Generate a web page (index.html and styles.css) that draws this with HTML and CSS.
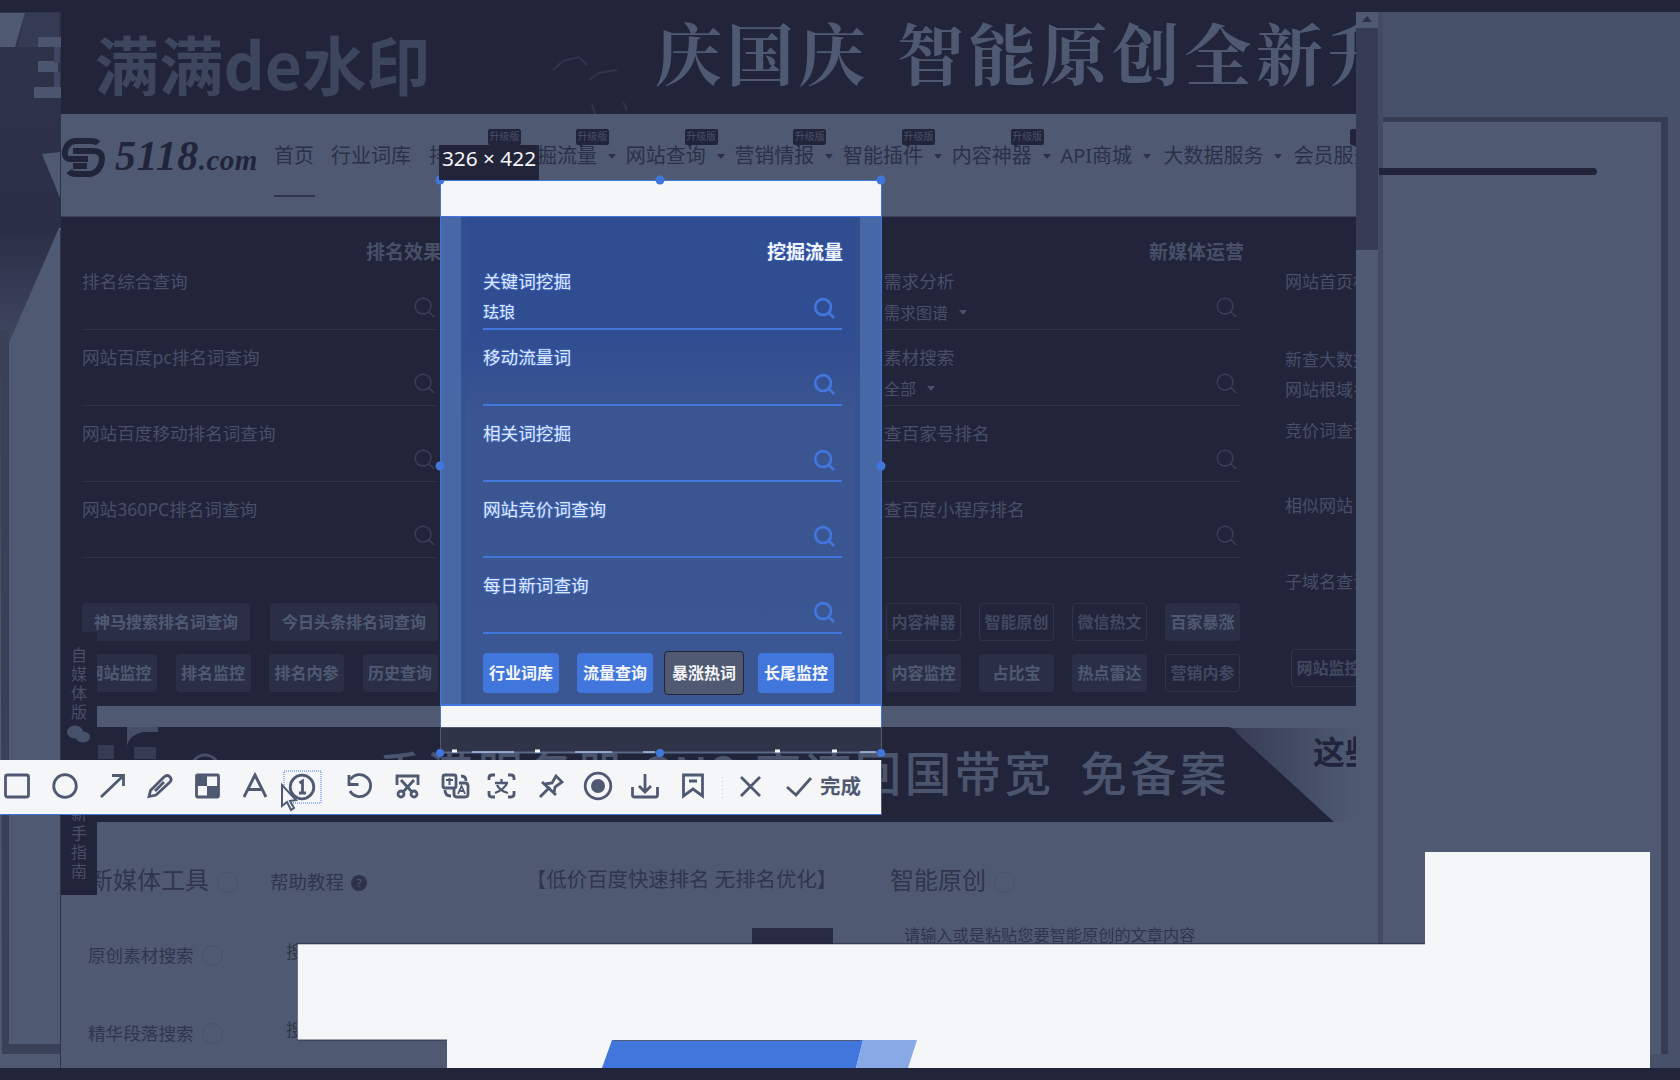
FILE: index.html
```html
<!DOCTYPE html>
<html lang="zh-CN">
<head>
<meta charset="utf-8">
<title>5118 截图</title>
<link rel="stylesheet" href="styles.css">
</head>
<body>
<svg class="defs" width="0" height="0">
  <symbol id="mag" viewBox="0 0 24 24"><circle cx="11" cy="11" r="8.6"/><path d="M17 17l6 6"/></symbol>
</svg>
<div class="screen">
  <div class="edge"></div>
  <div class="stage">
    <div class="gutter">
      <svg width="61" height="1056" viewBox="0 12 61 1056">
        <defs><linearGradient id="g" x1="0" y1="0" x2="0" y2="1"><stop offset="0" stop-color="#303449"/><stop offset=".6" stop-color="#2b2f46"/><stop offset="1" stop-color="#434c64"/></linearGradient></defs>
        <rect y="12" width="61" height="360" fill="url(#g)"/>
        <path d="M0 13h59v26H39v8H18l7-34z" fill="#353b52"/>
        <path d="M0 13h25L15 47H0z" fill="#4f5a72"/>
        <path d="M38 37h23v10H38zM38 61h20v11H38zM34 87h27v11H34z" fill="#4b556d"/>
        <path d="M54 47h6v16h-6zM54 72h6v15h-6z" fill="#3f4860"/>
        <path d="M42 154l18-2v46z" fill="#4f5a72"/>
        <path d="M59 228L8 345v723h53V228z" fill="#4f5a72"/>
        <path d="M0 330h9v714h52v10H2z" fill="#3a4157"/>
        <path d="M60.500 230v838" stroke="#30354b"/>
      </svg>
    </div>
    <main class="page">
      <header class="hero">
        <span class="mark">满满de水印</span>
        <svg class="bird" width="80" height="102" viewBox="0 0 80 102"><path d="M6 58l10-9 16-4 8 8M42 68l10-7 18-3M45 92l3 10M76 90l6 12" fill="none" stroke="#30354b" stroke-width="2"/></svg>
        <span class="slogan">庆国庆 智能原创全新升</span>
      </header>
      <nav class="nav">
        <svg class="logo" width="45" height="42" viewBox="0 0 45 42"><g fill="none" stroke="#22243a" stroke-width="6" stroke-linejoin="round"><path d="M37 6.500Q35 4 30 4H14Q6 5 4 14q-1 8 5 8h18"/><path d="M12 14h20q9 0 9 8-1 12-11 15H15q-5 0-7-3"/><path d="M12 29h14"/></g></svg>
        <span class="brand">5118<small>.com</small></span>
        <div class="menu">
          <a class="home">首页</a><a class="lib">行业词库</a>
          <a class="item w">排名监控<b>升级版</b></a>
          <a class="item">挖掘流量<i></i><b>升级版</b></a>
          <a class="item">网站查询<i></i><b>升级版</b></a>
          <a class="item">营销情报<i></i><b>升级版</b></a>
          <a class="item">智能插件<i></i><b>升级版</b></a>
          <a class="item">内容神器<i></i><b>升级版</b></a>
          <a class="item api">API商城<i></i></a>
          <a class="item data">大数据服务<i></i></a>
          <a class="item">会员服务<b class="last"></b></a>
        </div>
      </nav>
      <section class="board">
        <div class="col c1">
          <h3>排名效果</h3>
          <div class="field"><label>排名综合查询</label><div class="in"><svg><use href="#mag"/></svg></div></div>
          <div class="field"><label>网站百度pc排名词查询</label><div class="in"><svg><use href="#mag"/></svg></div></div>
          <div class="field"><label>网站百度移动排名词查询</label><div class="in"><svg><use href="#mag"/></svg></div></div>
          <div class="field"><label>网站360PC排名词查询</label><div class="in"><svg><use href="#mag"/></svg></div></div>
          <div class="btns wide"><span>神马搜索排名词查询</span><span>今日头条排名词查询</span></div>
          <div class="btns"><span>网站监控</span><span>排名监控</span><span>排名内参</span><span>历史查询</span></div>
        </div>
        <div class="col c3">
          <h3>新媒体运营</h3>
          <div class="field"><label>需求分析</label><div class="in"><em>需求图谱<i></i></em><svg><use href="#mag"/></svg></div></div>
          <div class="field"><label>素材搜索</label><div class="in"><em>全部<i></i></em><svg><use href="#mag"/></svg></div></div>
          <div class="field"><label>查百家号排名</label><div class="in"><svg><use href="#mag"/></svg></div></div>
          <div class="field"><label>查百度小程序排名</label><div class="in"><svg><use href="#mag"/></svg></div></div>
          <div class="btns"><span class="off">内容神器</span><span class="off">智能原创</span><span class="off">微信热文</span><span>百家暴涨</span></div>
          <div class="btns"><span>内容监控</span><span>占比宝</span><span>热点雷达</span><span class="off">营销内参</span></div>
        </div>
        <div class="col c4">
          <p>网站首页权重</p><p class="p2">新查大数据</p><p class="p3">网站根域名</p><p class="p4">竞价词查询</p><p class="p5">相似网站</p><p class="p6">子域名查询</p>
          <div class="btns"><span class="off">网站监控</span></div>
        </div>
      </section>
      <section class="ad">
        <svg width="1295" height="95" viewBox="0 0 1295 95">
          <defs><linearGradient id="h"><stop offset="0" stop-color="#363c53"/><stop offset="1" stop-color="#4f5a72"/></linearGradient></defs>
          <path d="M1171 1h124v94h-22z" fill="url(#h)"/><path d="M0 0h1168q5 1 8 6l97 89H0z" fill="#22243a"/>
          <path d="M66 0h31v5H82Q68 8 66 19z" fill="#454e66"/><path d="M37 18h16v14H37zM73 20h22v12H73z" fill="#353b52"/><circle cx="144" cy="42" r="14" fill="none" stroke="#454e66" stroke-width="3"/>
        </svg>
        <span class="adtext">香港服务器 CN2 高速回国带宽 <s>免备案</s></span><span class="more">这些</span>
      </section>
      <section class="tools">
        <div class="left">
          <h4>新媒体工具<u></u></h4><p class="help">帮助教程<q>?</q></p>
          <p class="t1">原创素材搜索<u></u></p><p class="t2">搜</p>
          <p class="t1">精华段落搜索<u></u></p><p class="t2">搜</p>
        </div>
        <div class="mid"><p>【低价百度快速排名 无排名优化】</p><span></span></div>
        <div class="right"><h4>智能原创<u></u></h4><p>请输入或是粘贴您要智能原创的文章内容</p></div>
      </section>
      <aside class="side"><span>自</span><span>媒</span><span>体</span><span>版</span><svg width="24" height="18" viewBox="0 0 24 18"><ellipse cx="8" cy="7" rx="8" ry="6.500"/><ellipse cx="16" cy="12" rx="7" ry="5.500"/></svg><span class="gap">新</span><span>手</span><span>指</span><span>南</span></aside>
    </main>
    <div class="scroll"><svg width="22" height="16" viewBox="0 0 22 16"><path d="M6 10l5-6 5 6z" fill="#2c3047"/></svg><div class="thumb"></div></div>
    <aside class="desk"><div class="doc"><div class="bar"></div></div></aside>
  </div>
  <div class="edge"></div>

  <svg class="cover" width="1353" height="216" viewBox="297 852 1353 216">
    <path d="M297 944H1425V852H1650V1068H447V1040H297z" fill="#f5f6f8"/>
    <path d="M612 1040H863L856 1068H602z" fill="#4176dd"/><path d="M863 1040H917L908 1068H856z" fill="#88a9e6"/>
    <path d="M614 1040.500H860" stroke="#4f5a72"/><path d="M297 943.800H1425M297.300 944V1040H447" fill="none" stroke="#22243a" stroke-width=".8"/>
  </svg>

  <section class="pick">
    <div class="strip top"></div>
    <div class="col c2">
      <h3>挖掘流量</h3>
      <div class="field"><label>关键词挖掘</label><div class="in"><em>珐琅</em><svg><use href="#mag"/></svg></div></div>
      <div class="field"><label>移动流量词</label><div class="in"><svg><use href="#mag"/></svg></div></div>
      <div class="field"><label>相关词挖掘</label><div class="in"><svg><use href="#mag"/></svg></div></div>
      <div class="field"><label>网站竞价词查询</label><div class="in"><svg><use href="#mag"/></svg></div></div>
      <div class="field"><label>每日新词查询</label><div class="in"><svg><use href="#mag"/></svg></div></div>
      <div class="btns"><span>行业词库</span><span>流量查询</span><span class="hot">暴涨热词</span><span>长尾监控</span></div>
    </div>
    <div class="strip"></div>
    <div class="foot"></div>
    <svg class="grips" width="457" height="589" viewBox="-8 -8 457 589">
      <path d="M.500 546V.500H441.500V546" fill="none" stroke="#4176dd"/>
      <path d="M.500 546V573M441.500 546V573" stroke="#4f5a72"/><path d="M0 572.500H441" stroke="#596988" stroke-width="2"/>
      <path d="M32 572h42M135 572h37M203 572h12M420 572h16" stroke="#a9bde9" stroke-width="1.500"/>
      <path d="M12 571h5M95 571h5M335 571h5M392 571h5" stroke="#f5f6f8" stroke-width="3"/>
      <g fill="#4176dd"><circle cx="0" cy="0" r="4.500"/><circle cx="220" cy="0" r="4.500"/><circle cx="441" cy="0" r="4.500"/><circle cx="0" cy="286" r="4.500"/><circle cx="441" cy="286" r="4.500"/><circle cx="0" cy="573" r="4"/><circle cx="220" cy="573" r="4"/><circle cx="441" cy="573" r="4"/></g>
    </svg>
  </section>
  <div class="size">326 × 422</div>

  <div class="toolbar">
    <svg class="icons" width="881" height="54" viewBox="0 760 881 54">
      <g fill="none" stroke="#4f5a72" stroke-width="2.800">
        <rect x="5.500" y="775" width="23" height="22" rx="2"/>
        <circle cx="65" cy="786" r="11.300"/>
        <path d="M101 797L123 776M112 775.500h11.500V786"/>
        <path d="M149 796.500l1.500-6L164 777q3.500-3 6 0t-.500 5.500L156 795zM155 791l9-9"/>
        <rect x="196.500" y="775" width="22" height="22" rx="1"/>
        <path d="M244 797L255 775L266 797M248.500 789.500h13"/>
        <circle cx="302" cy="787" r="11.800"/><path d="M299.500 783l3-2v12M299 793h7"/>
        <path d="M350.500 779.500A11 11 0 1 1 350 791"/>
        <path d="M349 775v9.500h9.500"/>
        <path d="M397 785v-9h21v9M401 780l11 12M414 780l-11 12"/><circle cx="401" cy="794" r="3"/><circle cx="414" cy="794" r="3"/>
        <rect x="443" y="775" width="13" height="13" rx="2"/><path d="M459 783h6q3 0 3 3v8q0 3-3 3h-8q-3 0-3-3v-5M461 776q5 0 5 5M445 790q0 6 6 6"/><path d="M446 780h7M449.500 778v7" stroke-width="2"/><path d="M458 794l3.500-8 3.500 8M459 791h5" stroke-width="1.800"/>
        <path d="M489 780v-2q0-3 3-3h3M508 775h3q3 0 3 3v2M514 791v3q0 3-3 3h-3M495 797h-3q-3 0-3-3v-3"/><path d="M495 783h13M501.500 779v4M507 783q-2 6-12 10M497 785q3 6 11 8" stroke-width="2.300"/>
        <path d="M540 797l10-10M542 782l14 13M545 784l7-1 4-7 6 6-7 5-1 6"/>
        <circle cx="598" cy="786" r="12.800"/>
        <path d="M645 774v18M639 786l6 6 6-6M632.500 787v8q0 2 2 2h21q2 0 2-2v-8"/>
        <path d="M683.500 775h19v21l-9.500-7-9.500 7zM689 781h8"/>
        <path d="M741 777l19 19M760 777l-19 19M787 787l9 8 15-17"/>
      </g>
      <circle cx="598" cy="786" r="7" fill="#4f5a72"/>
      <path d="M196 775h11v11h-11zM207 786h12v12h-12z" fill="#4f5a72"/>
      <path d="M722.500 777v22" stroke="#b8c6e4" stroke-dasharray="1 3"/>
      <rect x="284" y="771" width="37" height="32" fill="none" stroke="#4176dd" stroke-dasharray="1 1"/>
      <path d="M282 785v21l5-4 4 8 3-2-4-7 6-1z" fill="#f5f6f8" stroke="#4f5a72" stroke-width="2"/>
    </svg>
    <span class="done">完成</span>
  </div>
</div>
</body>
</html>
```
FILE: styles.css
```css
:root{--ink:#22243a;--slate:#4f5a72;--blue:#4176dd;--paper:#f5f6f8}
*{box-sizing:border-box}
body,h3,h4,p{margin:0}
body{background:var(--ink);font-family:"Noto Sans","Noto Sans CJK SC",sans-serif;color:var(--slate);overflow:hidden;white-space:nowrap}
.defs{position:absolute}
i,em{font-style:normal}
s,q{text-decoration:none;quotes:none}
q::before,q::after{content:none}
.screen{position:relative;width:1680px;height:1080px;display:flex;flex-direction:column;overflow:hidden}
.edge{height:12px;background:var(--ink);flex:none}
.stage{height:1056px;display:flex;background:var(--slate)}
.gutter{width:61px;flex:none}
.gutter svg{display:block}
.page{position:relative;width:1295px;flex:none;overflow:hidden;background:var(--slate)}

.hero{height:102px;background:var(--ink);display:flex;overflow:hidden}
.mark{width:456px;flex:none;padding-left:34px;font:700 64px/100px "Noto Sans CJK SC",sans-serif;letter-spacing:.2px;color:#3e465d}
.bird{width:80px;margin-left:30px;flex:none}
.slogan{margin-left:28px;flex:none;font:700 67px/78px "Noto Serif CJK SC","Noto Sans CJK SC",serif;letter-spacing:4.800px;word-spacing:5px;color:var(--slate)}

.nav{height:103px;display:flex;border-bottom:1px solid #394057;color:#2b3047}
.logo{margin-top:23px;width:45px;flex:none}
.brand{width:168px;padding-left:9px;font:italic 700 42px/84px "Liberation Serif",serif;color:var(--ink);letter-spacing:.5px;flex:none}
.brand small{font-size:29px}
.menu{display:flex;font-size:20px;line-height:28px;padding-top:28px}
.menu a{height:60px;flex:none}
.menu .home{width:41px;border-bottom:2px solid #2f344a;margin-right:16px;height:55px}
.lib{width:98px}
.item{position:relative;width:108.700px}
.item.w{width:88px}
.item.api{width:103px}
.item.data{width:130px}
.menu i,.in i{display:inline-block;border:4px solid transparent;border-top:5px solid currentColor;border-bottom:0;margin-left:11px;vertical-align:4px}
.item b{position:absolute;left:59px;top:-13px;width:33px;height:16px;background:var(--ink);border-radius:2px;color:#475169;font-size:10px;line-height:15px;text-align:center;font-weight:400}
.item b::after{content:"";position:absolute;left:2px;top:15px;border:3px solid transparent;border-top-color:var(--ink)}
.item b.last{left:57px}

.board{height:489px;background:var(--ink);display:flex;color:#475068}
.col h3{height:51px;padding-top:23px;font-size:19px;line-height:24px;text-align:right}
.c1{width:375px;padding-left:21px;margin-right:448px;flex:none}
.c1 h3{padding-right:0;margin-right:-6px}
.c3{width:356px;flex:none}
.c3 h3{padding-right:0;margin-right:-4px}
.c4{padding:51px 0 0 45px}
.field{height:62px;margin-bottom:14px;border-bottom:1px solid #2d3247}
.field label{display:block;height:28px;font-size:17.600px;line-height:27px}
.in{height:33px;display:flex;align-items:center}
.in em{font-size:16px;line-height:28px}
.in svg{width:22px;height:22px;margin:-11px 3px 0 auto;fill:none;stroke:#3a4158;stroke-width:1.500}
.c1 .in svg{margin-right:1px}
.btns{display:flex;gap:18px;height:38px;margin-bottom:13px}
.btns span{width:75px;flex:none;border-radius:4px;background:#2b2f45;text-align:center;font-size:16px;font-weight:700;line-height:38px;color:#4f5a72}
.c1 .field:nth-last-child(3),.c3 .field:nth-last-child(3){margin-bottom:45px}
.wide span{width:168px}
.c1 .btns{gap:18.500px}
.c1 .btns.wide{gap:20px}
.c3 .btns{margin-left:2px}
.btns .off{background:var(--ink);border:1px solid #30354b;color:#414960;line-height:36px}
.c4 p{font-size:17px;line-height:28px;height:78px}
.c4 .p2{height:30px}.c4 .p3{height:41px}.c4 .p4{height:75px}.c4 .p5{height:76px}.c4 .p6{height:81px}
.c4 .btns{margin-left:6px}

.ad{position:relative;margin-top:21px;height:95px;display:flex;color:#4b556d}
.ad svg{position:absolute;left:0;top:0}
.adtext{position:relative;width:1169px;flex:none;text-align:right;font:500 46.500px/88px "Noto Sans CJK SC",sans-serif;letter-spacing:3.400px}
.adtext s{margin-left:12px}
.more{position:relative;margin-left:83px;flex:none;font-size:32px;line-height:50px;font-weight:700;color:var(--ink)}

.tools{display:flex;height:246px;color:#30354c}
.left{width:470px;padding:43px 0 0 27px;display:grid;grid-template-columns:182px 1fr;grid-template-rows:75px 78px 60px;align-content:start;flex:none}
.tools h4{font-size:24px;line-height:30px;font-weight:400;padding-left:1px}
.left p{font-size:17.600px;line-height:30px}
.left .help{font-size:18.500px;line-height:34px}
.left .t2{padding-left:16px;margin-top:-4px}
.tools u{display:inline-block;width:21px;height:21px;border:1px solid #475169;border-radius:50%;margin-left:8px;vertical-align:-4px}
q{display:inline-block;width:16px;height:16px;border-radius:50%;background:#2f344a;color:var(--slate);font-size:11px;line-height:16px;text-align:center;margin-left:7px;vertical-align:2px}
.mid{width:353px;padding-top:42px;font-size:20.400px;line-height:30px;flex:none}
.mid p{margin-left:-5px}
.mid span{display:block;width:81px;height:17px;margin:34px 0 0 221px;background:#282b41}
.right{padding:43px 0 0 5px}
.right p{padding-left:15px;font-size:16.200px;line-height:28px;margin-top:26px}

.side{position:absolute;left:0;top:620px;width:36px;height:263px;background:var(--ink);display:flex;flex-direction:column;align-items:center;padding-top:14px;font-size:16px;line-height:19px;color:#475068}
.side svg{margin-top:3px;fill:#475169}
.side .gap{margin-top:62px}

.scroll{width:27px;flex:none;border-right:5px solid #424b63}
.scroll svg{display:block}
.thumb{height:222px;background:#353c53}
.desk{flex:1;background:#475169;padding:105px 12px 14px 0}
.doc{height:100%;background:var(--slate);border:solid #363d53;border-width:5px 7px 0 0;padding-top:46px}
.bar{width:218px;height:7px;margin-left:-4px;background:var(--ink);border-radius:0 4px 4px 0}

.cover{position:absolute;left:297px;top:852px}
.pick{position:absolute;left:440px;top:180px;width:441px;height:573px;display:flex;flex-direction:column}
.strip{height:21px;background:var(--paper);flex:none}
.strip.top{height:37px;border-bottom:1px solid var(--blue)}
.c2{height:489px;flex:none;padding:0 38px 0 43px;color:var(--paper);background:linear-gradient(90deg,#4768a7 0 21px,#34509090 21px 26px,transparent 26px 415px,#34509090 415px 420px,#4768a7 420px),linear-gradient(#304d92 0 24%,#3a5590 40%,#3b5793 100%);border-bottom:2px solid var(--blue)}
.c2 .field{border-bottom:2px solid var(--blue);width:359px}
.c2 .field label,.c2 .in em{text-shadow:0 0 2px var(--blue),0 0 2px var(--blue);color:#e0e7f5}
.c2 h3{text-shadow:0 0 2px var(--blue)}
.c2 .in em{margin-top:-2px}
.c2 .in svg{stroke:var(--blue);stroke-width:3;margin-right:7px;margin-top:-10px}
.c2 .btns{margin-top:4px;height:42px;gap:18px;padding-top:5px}
.c2 .btns span{height:40px;background:var(--blue);color:var(--paper);width:76px;line-height:40px}
.c2 .btns .hot{background:var(--slate);border:1px solid var(--ink);width:80px;height:44px;line-height:42px;margin:-2px -4px 0 -7px}
.foot{height:26px;background:#303448;border-top:1px solid var(--slate);flex:none}
.grips{position:absolute;left:-8px;top:-8px}
.size{position:absolute;left:439px;top:145px;width:100px;height:35px;background:var(--ink);color:var(--paper);font-size:20.800px;line-height:27px;text-align:center}
.toolbar{position:absolute;left:0;top:760px;width:882px;height:55px;background:var(--paper);border-bottom:1px solid var(--blue);border-right:1px solid var(--slate);display:flex;justify-content:flex-end}
.icons{position:absolute;left:0;top:0}
.done{padding-right:20px;font-size:20.500px;line-height:52px;font-weight:700;color:#4f5a72}
```
